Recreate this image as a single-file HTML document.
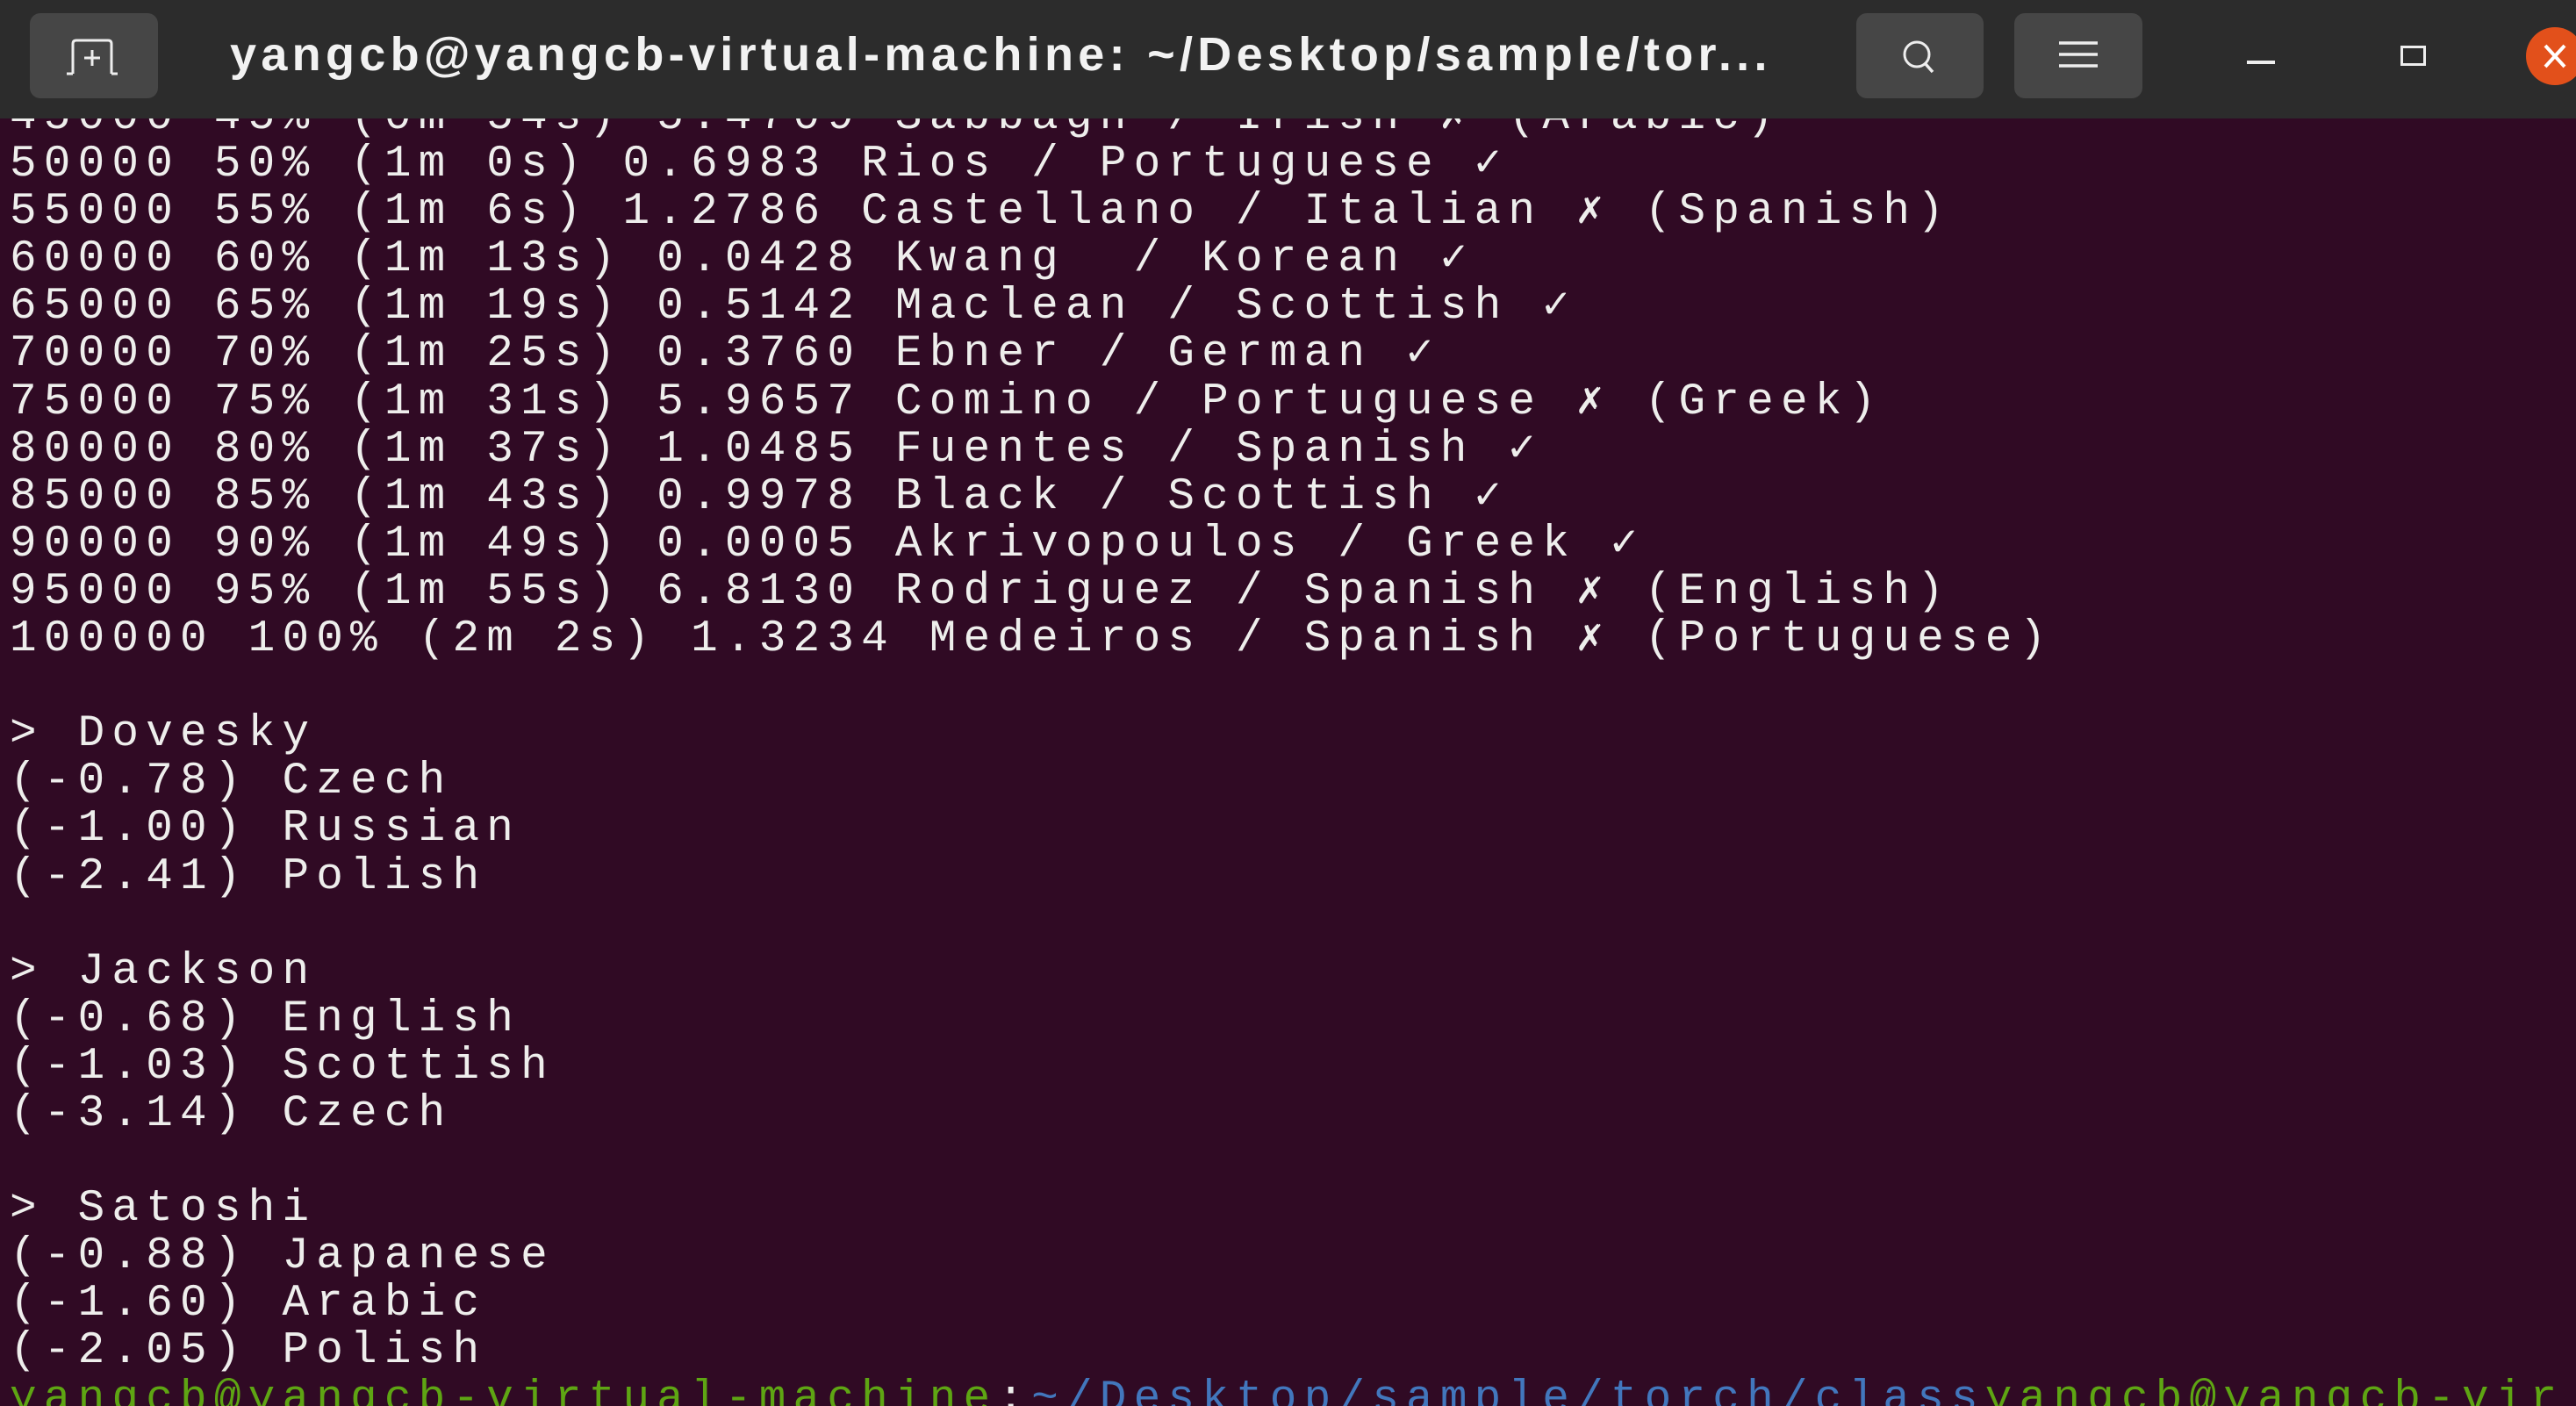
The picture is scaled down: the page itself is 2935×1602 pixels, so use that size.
<!DOCTYPE html>
<html><head><meta charset="utf-8"><style>
html,body{margin:0;padding:0;width:2935px;height:1602px;overflow:hidden;background:#300a24;}
.wrap{position:absolute;left:0;top:0;width:2935px;height:1602px;overflow:hidden;}
.bar{position:absolute;left:0;top:0;width:2935px;height:135px;background:#2c2c2c;z-index:2;overflow:hidden;}
.btn{position:absolute;top:15px;height:97px;background:#464646;border-radius:12px;}
.title{position:absolute;left:262px;top:31px;font:bold 54px "Liberation Sans","DejaVu Sans",sans-serif;color:#f2f2f2;letter-spacing:5.3px;white-space:nowrap;}
pre{position:absolute;left:11px;top:107px;margin:0;font:51px/54.1px "Liberation Mono","DejaVu Sans Mono",monospace;letter-spacing:8.2px;color:#eeeeec;z-index:1;}
.g{color:#5ea513}.b{color:#4277bd}
</style></head><body><div class="wrap">
<div class="bar">
 <div class="btn" style="left:34px;width:146px"></div>
 <svg style="position:absolute;left:70px;top:40px" width="70" height="52" viewBox="0 0 70 52"><path d="M13 44 V10 Q13 6 17 6 H53 Q57 6 57 10 V44" fill="none" stroke="#eee" stroke-width="3"/><path d="M6 44 H13 M57 44 H64 M35 17 V35 M26 26 H44" stroke="#eee" stroke-width="3"/></svg>
 <div class="title">yangcb@yangcb-virtual-machine: ~/Desktop/sample/tor...</div>
 <div class="btn" style="left:2115px;width:145px"></div>
 <svg style="position:absolute;left:2160px;top:38px" width="56" height="56" viewBox="0 0 56 56"><circle cx="24" cy="24" r="14" fill="none" stroke="#eee" stroke-width="3"/><path d="M34 35 L42 44" stroke="#eee" stroke-width="3.5"/></svg>
 <div class="btn" style="left:2295px;width:146px"></div>
 <svg style="position:absolute;left:2342px;top:44px" width="52" height="36" viewBox="0 0 52 36"><path d="M4 5 H48 M4 18 H48 M4 31 H48" stroke="#eee" stroke-width="3.5"/></svg>
 <div style="position:absolute;left:2560px;top:69px;width:32px;height:4px;background:#eee"></div>
 <div style="position:absolute;left:2735px;top:52px;width:29px;height:23px;border:3px solid #eee;box-sizing:border-box"></div>
 <div style="position:absolute;left:2878px;top:31px;width:66px;height:66px;border-radius:50%;background:#e2501b"></div>
 <svg style="position:absolute;left:2896px;top:50px" width="40" height="28" viewBox="0 0 40 28"><path d="M4 2 L26 26 M26 2 L4 26" stroke="#fff" stroke-width="4"/></svg>
</div>
<pre>45000 45% (0m 54s) 5.4709 Sabbagh / Irish ✗ (Arabic)
50000 50% (1m 0s) 0.6983 Rios / Portuguese ✓
55000 55% (1m 6s) 1.2786 Castellano / Italian ✗ (Spanish)
60000 60% (1m 13s) 0.0428 Kwang  / Korean ✓
65000 65% (1m 19s) 0.5142 Maclean / Scottish ✓
70000 70% (1m 25s) 0.3760 Ebner / German ✓
75000 75% (1m 31s) 5.9657 Comino / Portuguese ✗ (Greek)
80000 80% (1m 37s) 1.0485 Fuentes / Spanish ✓
85000 85% (1m 43s) 0.9978 Black / Scottish ✓
90000 90% (1m 49s) 0.0005 Akrivopoulos / Greek ✓
95000 95% (1m 55s) 6.8130 Rodriguez / Spanish ✗ (English)
100000 100% (2m 2s) 1.3234 Medeiros / Spanish ✗ (Portuguese)

&gt; Dovesky
(-0.78) Czech
(-1.00) Russian
(-2.41) Polish

&gt; Jackson
(-0.68) English
(-1.03) Scottish
(-3.14) Czech

&gt; Satoshi
(-0.88) Japanese
(-1.60) Arabic
(-2.05) Polish
<span class="g">yangcb@yangcb-virtual-machine</span>:<span class="b">~/Desktop/sample/torch/class</span><span class="g">yangcb@yangcb-vir</span></pre>
</div></body></html>
